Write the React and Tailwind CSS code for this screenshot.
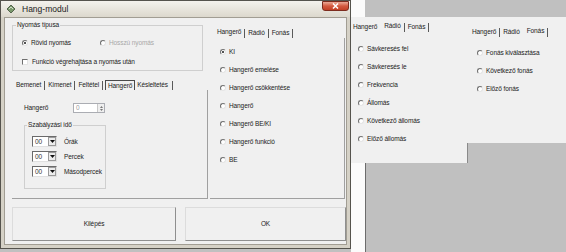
import React from 'react';

// Kis rádiógomb (klasszikus, besüllyesztett kör)
const Radio = ({ label, checked, disabled }) => (
  <div className="flex items-center h-[8px]">
    <span className="w-[6px] h-[6px] rounded-full bg-white border border-[#e4e4e4] border-t-[#6f6f6f] border-l-[#6f6f6f] flex items-center justify-center shrink-0">
      {checked && <span className="w-[2px] h-[2px] rounded-full bg-[#1a1a1a]" />}
    </span>
    <span className={`ml-[3px] whitespace-nowrap ${disabled ? 'text-[#a8a8a8]' : 'text-[#222]'}`}>{label}</span>
  </div>
);

const Check = ({ label }) => (
  <div className="flex items-center h-[8px]">
    <span className="w-[6px] h-[6px] bg-white border border-[#e4e4e4] border-t-[#6f6f6f] border-l-[#6f6f6f] shrink-0" />
    <span className="ml-[4px] whitespace-nowrap text-[#222]">{label}</span>
  </div>
);

const Sep = () => <span className="w-[1px] h-[9px] bg-[#5a5a5a] mx-[2px] shrink-0" />;

// Fülsor: a kiválasztott fül előtt nincs elválasztó, a felirata kicsit feljebb ül
const TabRow = ({ items, active }) => (
  <div className="flex items-center h-[10px] whitespace-nowrap text-[#222]">
    {items.map((t, i) => (
      <React.Fragment key={t}>
        <span className={i === active ? '-translate-y-[1px] px-[1px]' : 'px-[1px]'}>{t}</span>
        {i + 1 !== active && <Sep />}
        {i + 1 === active && <span className="w-[5px]" />}
      </React.Fragment>
    ))}
  </div>
);

const Combo = ({ label }) => (
  <div className="flex items-center h-[11px]">
    <div className="w-[25px] h-[11px] flex bg-white border border-[#e0e0e0] border-t-[#6a6a6a] border-l-[#6a6a6a]">
      <span className="flex-1 pl-[2px] leading-[9px] text-[#333]">00</span>
      <span className="w-[8px] h-[9px] bg-[#ececec] border border-[#9a9a9a] flex items-center justify-center">
        <svg width="5" height="3" viewBox="0 0 5 3"><path d="M0 0h5L2.5 3z" fill="#111" /></svg>
      </span>
    </div>
    <span className="ml-[7px] text-[#222]">{label}</span>
  </div>
);

const Button = ({ label, className }) => (
  <div className={`h-[34px] flex items-center justify-center bg-[#f0f0f0] border border-[#dcdcdc] border-r-[#8f8f8f] border-b-[#8f8f8f] text-[#222] ${className}`}>
    {label}
  </div>
);

export default function App() {
  return (
    <div className="flex w-[566px] h-[252px] bg-[#c0c0c0] overflow-hidden text-[6.5px] leading-[8px] tracking-[-0.1px] [font-family:'Liberation_Sans',Arial,sans-serif]">
      {/* Fő ablak */}
      <div className="w-[351px] h-[249px] shrink-0 flex flex-col border border-[#55534d] bg-[#d5d1c6]">
        <div className="h-[16px] flex items-start bg-gradient-to-b from-[#f4f2ed] to-[#dcd8cd]">
          <svg className="ml-[5px] mt-[3px]" width="10" height="10" viewBox="0 0 10 10">
            <path d="M1 5 L5 1 L9 5 L5 9 Z" fill="#7b9a6c" stroke="#3d4d37" strokeWidth="0.8" />
            <path d="M3 5 L5 3 L7 5" fill="none" stroke="#e6eedf" strokeWidth="0.8" />
          </svg>
          <span className="ml-[6px] text-[8.5px] leading-[16px] tracking-normal text-[#1d1d1d]">Hang-modul</span>
          <div className="ml-auto mr-[1px] w-[27px] h-[10px] rounded-b-[3px] border border-[#7d2c1e] bg-gradient-to-b from-[#eba896] via-[#d35a40] to-[#c23f25] flex items-center justify-center">
            <svg width="7" height="6" viewBox="0 0 7 6">
              <path d="M1 0.5 L6 5.5 M6 0.5 L1 5.5" stroke="#fff" strokeWidth="1.5" />
            </svg>
          </div>
        </div>
        <div className="flex-1 mx-[3px] mb-[3px] bg-[#f0f0f0] border border-[#a19d93] flex flex-col">
          <div className="flex items-start">
            {/* bal oszlop */}
            <div className="ml-[7px] w-[196px] flex flex-col">
              <fieldset className="mt-[3px] w-[191px] h-[50px] border border-[#cfcfcf]">
                <legend className="ml-[3px] px-[1px] text-[#222]">Nyomás típusa</legend>
                <div className="pl-[9px] flex flex-col">
                  <div className="mt-[10px] flex">
                    <div className="w-[78px]"><Radio label="Rövid nyomás" checked /></div>
                    <Radio label="Hosszú nyomás" disabled />
                  </div>
                  <div className="mt-[11px]"><Check label="Funkció végrehajtása a nyomás után" /></div>
                </div>
              </fieldset>
              <div className="mt-[9px] h-[10px] pl-[3px] flex items-center whitespace-nowrap text-[#222]">
                <span className="px-[1px]">Bemenet</span><Sep />
                <span className="px-[1px]">Kimenet</span><Sep />
                <span className="px-[1px]">Feltétel</span><Sep />
                <span className="px-[2px] h-[10px] leading-[9px] border border-b-0 border-[#4a4a4a]">Hangerő</span>
                <span className="px-[2px]">Késleltetés</span><Sep />
              </div>
              <div className="h-[109px] border-r border-b border-[#a0a0a0] pl-[12px] flex flex-col">
                <div className="mt-[13px] h-[10px] flex items-center">
                  <span className="w-[49px] text-[#222]">Hangerő</span>
                  <div className="w-[32px] h-[10px] flex bg-white border border-[#abadb3]">
                    <span className="flex-1 pl-[2px] leading-[8px] text-[#9a9a9a]">0</span>
                    <span className="w-[7px] h-[8px] bg-[#efefef] border-l border-[#c8c8c8] flex flex-col items-center justify-center gap-[1px]">
                      <svg width="3" height="2" viewBox="0 0 3 2"><path d="M0 2h3L1.5 0z" fill="#777" /></svg>
                      <svg width="3" height="2" viewBox="0 0 3 2"><path d="M0 0h3L1.5 2z" fill="#777" /></svg>
                    </span>
                  </div>
                </div>
                <fieldset className="mt-[8px] w-[82px] h-[68px] border border-[#cfcfcf]">
                  <legend className="ml-[2px] px-[1px] text-[#222]">Szabályzási idő</legend>
                  <div className="mt-[7px] pl-[7px] flex flex-col gap-[4px]">
                    <Combo label="Órák" />
                    <Combo label="Percek" />
                    <Combo label="Másodpercek" />
                  </div>
                </fieldset>
              </div>
            </div>
            {/* jobb oszlop */}
            <div className="ml-[2px] w-[135px] flex flex-col">
              <div className="mt-[10px] pl-[6px]">
                <TabRow items={['Hangerő', 'Rádió', 'Fonás']} active={0} />
              </div>
              <div className="h-[161px] border-r border-b border-[#a0a0a0] pl-[10px] pt-[10px] flex flex-col gap-[10px]">
                <Radio label="KI" checked />
                <Radio label="Hangerő emelése" />
                <Radio label="Hangerő csökkentése" />
                <Radio label="Hangerő" />
                <Radio label="Hangerő BE/KI" />
                <Radio label="Hangerő funkció" />
                <Radio label="BE" />
              </div>
            </div>
          </div>
          <div className="mt-[8px] flex">
            <Button label="Kilépés" className="ml-[7px] w-[164px]" />
            <Button label="OK" className="ml-[9px] w-[161px]" />
          </div>
        </div>
      </div>

      {/* Rádió panel */}
      <div className="w-[116px] shrink-0 flex flex-col">
        <div className="h-[17px] flex">
          <div className="w-[14px] bg-[#fbfbfb]" />
          <div className="flex-1" />
        </div>
        <div className="h-[146px] bg-[#f0f0f0] flex flex-col">
          <div className="mt-[5px] pl-[1px]">
            <TabRow items={['Hangerő', 'Rádió', 'Fonás']} active={1} />
          </div>
          <div className="mt-[13px] pl-[7px] flex flex-col gap-[10px]">
            <Radio label="Sávkeresés fel" />
            <Radio label="Sávkeresés le" />
            <Radio label="Frekvencia" />
            <Radio label="Állomás" />
            <Radio label="Következő állomás" />
            <Radio label="Előző állomás" />
          </div>
        </div>
        <div className="flex-1 flex">
          <div className="w-[14px] bg-[#fbfbfb]" />
          <div className="flex-1 border-l border-[#6c6c6c]" />
        </div>
      </div>

      {/* Fonás panel */}
      <div className="flex-1 flex flex-col">
        <div className="h-[17px]" />
        <div className="h-[126px] bg-[#f0f0f0] flex flex-col">
          <div className="mt-[10px] pl-[4px]">
            <TabRow items={['Hangerő', 'Rádió', 'Fonás']} active={2} />
          </div>
          <div className="mt-[12px] pl-[10px] flex flex-col gap-[10px]">
            <Radio label="Fonás kiválasztása" />
            <Radio label="Következő fonás" />
            <Radio label="Előző fonás" />
          </div>
        </div>
        <div className="h-[20px] border-l border-[#8a8a8a]" />
      </div>
    </div>
  );
}
